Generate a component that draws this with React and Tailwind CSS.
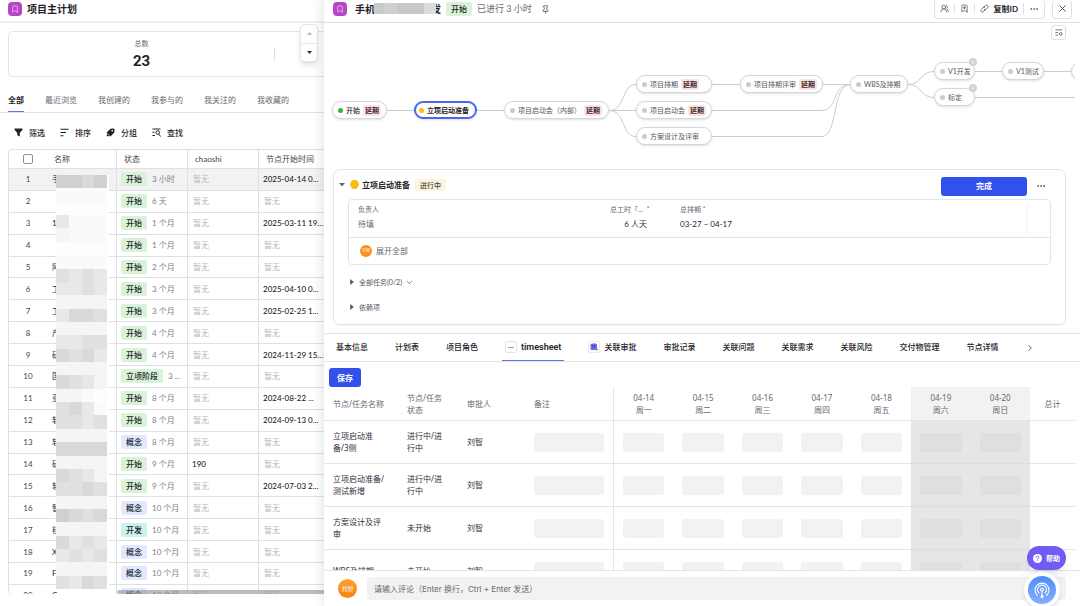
import { useState } from 'react';
import { Bookmark, BookmarkPlus, ChevronDown, ChevronRight, Ellipsis, Pin, UsersRound, X } from 'lucide-react';
import clsx from 'clsx';

const viewTabs = ['全部', '最近浏览', '我创建的', '我参与的', '我关注的', '我收藏的'];

const stateColors = {
  开始: 'bg-[#d9f3d8]',
  立项阶段: 'bg-[#d9f3d8]',
  概念: 'bg-[#e0e9ff]',
  开发: 'bg-[#caf2ee]',
};

const projects = [
  { name: '手', more: '…', state: '开始', age: '3 小时', start: '2025-04-14 0...' },
  { name: '', state: '开始', age: '6 天' },
  { name: '1', state: '开始', age: '1 个月', start: '2025-03-11 19...' },
  { name: '', state: '开始', age: '1 个月' },
  { name: '阿', more: '…', state: '开始', age: '2 个月' },
  { name: '工', more: '…', state: '开始', age: '3 个月', start: '2025-04-10 0...' },
  { name: '工', state: '开始', age: '3 个月', start: '2025-02-25 1...' },
  { name: '产', more: '行', state: '开始', age: '4 个月' },
  { name: '研', state: '开始', age: '4 个月', start: '2024-11-29 15...' },
  { name: '国', more: '司', state: '立项阶段', age: '3 ...' },
  { name: '亚', more: '司', state: '开始', age: '8 个月', start: '2024-08-22 ...' },
  { name: '软', state: '开始', age: '8 个月', start: '2024-09-13 0...' },
  { name: '软', more: '…', state: '概念', age: '8 个月' },
  { name: '研', state: '开始', age: '9 个月', chaoshi: '190' },
  { name: '软', state: '开始', age: '9 个月', start: '2024-07-03 2...' },
  { name: '智', more: '…', state: '概念', age: '10 个月' },
  { name: '核', more: '…', state: '开发', age: '10 个月' },
  { name: 'X', more: '…', state: '概念', age: '10 个月' },
  { name: 'F', state: '概念', age: '10 个月' },
  { name: 'C', state: '概念', age: '10 个月' },
];

// One string per mosaic row, one letter per block, dark to light
const shades = {
  a: 'bg-[#d0d0d1]',
  b: 'bg-[#d9d9da]',
  c: 'bg-[#dfe0e0]',
  d: 'bg-[#e7e8e8]',
  e: 'bg-[#f4f5f5]',
  f: 'bg-[#fafafa]',
  g: 'bg-[#fdfdfd]',
};
const mosaic = [
  'aaba', 'ffff', 'gggg', 'dfff', 'efff', 'gggg', 'ffff', 'cdcd', 'ddcd', 'eeee', 'dbbc',
  'eeee', 'ddcc', 'bcbd', 'eeee', 'bcde', 'eefg', 'cbdf', 'ccdc', 'eeee', 'bbbb', 'eeee',
  'bcde', 'ccbc', 'eeee', 'abcb', 'eeee', 'bdcd', 'dcdc', 'eeee', 'cdbc',
];

const flowNodes = [
  { label: '开始', late: true, dot: 'bg-[#35b934]', text: 'text-[#1f2329] font-medium', pos: 'left-[8px] top-[78px] w-[55px]' },
  { label: '立项启动准备', active: true, dot: 'bg-[#fbbf00]', text: 'text-[#1f2329] font-bold', pos: 'left-[90px] top-[78px] w-[63px]' },
  { label: '项目启动会（内部）', late: true, pos: 'left-[180px] top-[78px] w-[105px]' },
  { label: '项目排期', late: true, pos: 'left-[312px] top-[52px] w-[76px]' },
  { label: '项目启动会', late: true, pos: 'left-[312px] top-[78px] w-[76px]' },
  { label: '方案设计及评审', pos: 'left-[312px] top-[104px] w-[76px]' },
  { label: '项目排期评审', late: true, pos: 'left-[416px] top-[52px] w-[83px]' },
  { label: 'WBS及排期', pos: 'left-[526px] top-[52px] w-[58px]' },
  { label: 'V1开发', fold: true, pos: 'left-[610px] top-[39px] w-[41px]' },
  { label: '标定', fold: true, pos: 'left-[610px] top-[65px] w-[41px]' },
  { label: 'V1测试', pos: 'left-[678px] top-[39px] w-[42px]' },
  { label: '', pos: 'left-[747px] top-[39px] w-[42px]' },
];

const detailTabs = [
  '基本信息', '计划表', '项目角色', 'timesheet', '关联审批', '审批记录',
  '关联问题', '关联需求', '关联风险', '交付物管理', '节点详情',
];

const days = [
  { date: '04-14', week: '周一' },
  { date: '04-15', week: '周二' },
  { date: '04-16', week: '周三' },
  { date: '04-17', week: '周四' },
  { date: '04-18', week: '周五' },
  { date: '04-19', week: '周六', off: true },
  { date: '04-20', week: '周日', off: true },
];

const sheetRows = [
  { name: '立项启动准备/3侧', status: '进行中/进行中', who: '刘智' },
  { name: '立项启动准备/测试新增', status: '进行中/进行中', who: '刘智' },
  { name: '方案设计及评审', status: '未开始', who: '刘智' },
  { name: 'WBS及排期', status: '未开始', who: '刘智' },
];

function AppIcon() {
  return (
    <span className="flex size-[14px] shrink-0 items-center justify-center rounded-[4px] bg-[#b944c6] text-[#f3d6f6]">
      <Bookmark size={8} strokeWidth={2} />
    </span>
  );
}

function FunnelIcon() {
  return (
    <svg viewBox="0 0 18 18" className="size-[9px]" fill="currentColor">
      <path d="M1 1h16v2.5L11.5 10v7L6.5 14.5V10L1 3.500z" />
    </svg>
  );
}

function SortIcon() {
  return (
    <svg viewBox="0 0 18 18" className="size-[9px]" stroke="currentColor" strokeWidth="2" fill="none">
      <path d="M1 2.500h16M1 9h11M1 15.500h6" />
    </svg>
  );
}

function TagIcon() {
  return (
    <svg viewBox="0 0 18 18" className="size-[9px]">
      <path d="M9 1.500 15.500 1 17 2.500 16.500 9 9 17 1 9.500z" fill="currentColor" />
      <path d="M2.500 12 1 15l3 2 3-1z" fill="currentColor" />
      <circle cx="12.500" cy="5.500" r="1.700" fill="#fff" />
    </svg>
  );
}

function FindIcon() {
  return (
    <svg viewBox="0 0 18 18" className="size-[9px]" stroke="currentColor" strokeWidth="2" fill="none">
      <path d="M1 2h16M1 8.500h4M1 15h5M14 12.500 17 17" />
      <circle cx="11.500" cy="9" r="3.600" />
    </svg>
  );
}

function ClipIcon() {
  return (
    <svg viewBox="0 0 18 18" className="size-[9px]" stroke="currentColor" strokeWidth="1.600" fill="none" strokeLinecap="round">
      <path d="M7.500 7 11 2.800a3 3 0 0 1 4.600 3.800L12 11a3 3 0 0 1-3.600.8" />
      <path d="M10.500 11 7 15.200a3 3 0 0 1-4.600-3.800L6 7a3 3 0 0 1 3.600-.8" />
    </svg>
  );
}

const toolbar = [
  { label: '筛选', Icon: FunnelIcon },
  { label: '排序', Icon: SortIcon },
  { label: '分组', Icon: TagIcon },
  { label: '查找', Icon: FindIcon },
];

function ProjectTable() {
  const th = 'border-b border-r border-[#dee0e3] text-left font-normal text-[#41464f]';
  const td = 'border-b border-r border-[#dee0e3]';

  return (
    <div className="relative mb-[12px] ml-[8px] min-h-0 flex-1 overflow-hidden rounded-l-[4px] border-l border-t border-[#dee0e3]">
      <table className="h-[457px] w-[321px] table-fixed border-separate border-spacing-0">
        <colgroup>
          <col className="w-[38px]" />
          <col className="w-[70px]" />
          <col className="w-[71px]" />
          <col className="w-[71px]" />
          <col className="w-[71px]" />
        </colgroup>
        <thead>
          <tr className="h-[19px]">
            <th className="border-b border-[#dee0e3]">
              <input type="checkbox" aria-label="全选" className="mx-auto block size-[10px] appearance-none rounded-[2px] border border-[#8f959e] bg-white" />
            </th>
            <th className={clsx(th, 'pl-[7px]')}>名称</th>
            <th className={clsx(th, 'pl-[7px]')}>状态</th>
            <th className={clsx(th, 'pl-[7px]')}>chaoshi</th>
            <th className={clsx(th, 'whitespace-nowrap pl-[7px]')}>节点开始时间</th>
          </tr>
        </thead>
        <tbody>
          {projects.map((p, i) => (
            <tr key={i} className={clsx('h-[21px]', i === 0 && 'bg-[#f2f2f3]')}>
              <td className="border-b border-[#dee0e3] text-center text-[#41464f]">{i + 1}</td>
              <td className={clsx(td, 'pl-[5px] pr-[7px] text-[#1f2329]')}>
                <div className="flex justify-between">
                  <span>{p.name}</span>
                  <span>{p.more}</span>
                </div>
              </td>
              <td className={clsx(td, 'whitespace-nowrap pl-[4px]')}>
                <span className={clsx('inline-block rounded-[2px] px-[5px] font-medium leading-[14px] text-[#1f2329]', stateColors[p.state])}>{p.state}</span>
                <span className="ml-[5px] text-[#7a7f87]">{p.age}</span>
              </td>
              <td className={clsx(td, p.chaoshi ? 'pl-[4px] font-medium text-[#1f2329]' : 'pl-[5px] text-[#b5b9bf]')}>{p.chaoshi || '暂无'}</td>
              <td className={clsx(td, 'whitespace-nowrap', p.start ? 'pl-[4px] font-medium text-[#1f2329]' : 'pl-[5px] text-[#b5b9bf]')}>{p.start || '暂无'}</td>
            </tr>
          ))}
        </tbody>
      </table>

      <div className="absolute left-[47px] top-[25px] flex h-[414px] w-[53px] flex-col bg-white" aria-hidden="true">
        {mosaic.map((row, i) => (
          <div key={i} className="flex flex-1 pr-[2px]">
            {row.split('').map((c, j) => (
              <span key={j} className={clsx('flex-1', shades[c])} />
            ))}
          </div>
        ))}
      </div>

      <div className="absolute bottom-0 left-[108px] right-0 h-[4px] rounded-l-full bg-[#8f9096]/60" />
    </div>
  );
}

function ProjectList() {
  return (
    <div className="flex w-[30%] shrink-0 flex-col overflow-hidden">
      <div className="flex h-[23px] shrink-0 items-center gap-[5px] border-b-2 border-[#eff0f1] pb-[3px] pl-[8px]">
        <AppIcon />
        <h1 className="text-[10px] font-bold text-[#1f2329]">项目主计划</h1>
      </div>

      <div className="relative ml-[8px] mt-[8px] flex h-[46px] shrink-0 items-center rounded-l-[5px] border border-r-0 border-[#e3e4e6]">
        <div className="flex w-[265px] flex-col items-center gap-[4px]">
          <span className="text-[7px] leading-[9px] text-[#646a73]">总数</span>
          <strong className="font-[Roboto] text-[15px] font-bold leading-[18px] text-[#1f2329]">23</strong>
        </div>
        <span className="h-[14px] w-px bg-[#dee0e3]" />
        <div className="absolute -top-[8px] right-[6px] flex h-[38px] w-[18px] flex-col rounded-[4px] border border-[#e5e6e8] bg-white shadow-md">
          <button aria-label="上一个" className="flex flex-1 items-center justify-center border-b border-[#e5e6e8] text-[#b5b9bf]">
            <svg viewBox="0 0 10 6" className="w-[5px]" fill="currentColor"><path d="M5 0 10 6H0z" /></svg>
          </button>
          <button aria-label="下一个" className="flex flex-1 items-center justify-center text-[#2b2f36]">
            <svg viewBox="0 0 10 6" className="w-[5px]" fill="currentColor"><path d="M5 6 10 0H0z" /></svg>
          </button>
        </div>
      </div>

      <div className="mt-[11px] flex h-[25px] shrink-0 gap-[21px] border-b border-[#dee0e3] pl-[8px]">
        {viewTabs.map((t, i) => (
          <button key={t} className={clsx('whitespace-nowrap border-b', i === 0 ? 'border-[#5c75f3] font-bold text-[#1f2329]' : 'border-transparent text-[#646a73]')}>
            {t}
          </button>
        ))}
      </div>

      <div className="flex h-[36px] shrink-0 items-center gap-[15px] pl-[14px] pt-[3px]">
        {toolbar.map(({ label, Icon }) => (
          <button key={label} className="flex items-center gap-[6px] font-medium text-[#1f2329]">
            <Icon />
            {label}
          </button>
        ))}
      </div>

      <ProjectTable />
    </div>
  );
}

function DetailHeader() {
  return (
    <header className="flex h-[23px] shrink-0 items-center border-b border-[#dee0e3] pb-[4px] pl-[9px] pr-[8px]">
      <AppIcon />
      <h2 className="relative ml-[8px] flex w-[86px] justify-between text-[10px] font-bold text-[#1f2329]">
        <span>手机</span>
        <span>发</span>
        <span className="absolute left-[19px] top-0 flex h-[11px] w-[62px]" aria-hidden="true">
          <span className="w-[10px] bg-[#c9caca]" />
          <span className="w-[14px] bg-[#cfd0d0]" />
          <span className="w-[26px] bg-[#c7c9c9]" />
          <span className="flex-1 bg-[#dadbdb]" />
        </span>
      </h2>
      <span className="ml-[5px] rounded-[2px] bg-[#d9f3d8] px-[5px] font-medium leading-[14px] text-[#1f2329]">开始</span>
      <span className="ml-[5px] text-[9px] text-[#646a73]">已进行 3 小时</span>
      <button aria-label="固定" className="ml-[9px] text-[#41464f]"><Pin size={9} strokeWidth={2} /></button>

      <div className="ml-auto flex h-[19px] items-center rounded-[4px] border border-t-0 border-[#dee0e3] text-[#51565d]">
        <button aria-label="成员" className="border-r border-[#dee0e3] px-[5px]"><UsersRound size={9} /></button>
        <button aria-label="收藏" className="border-r border-[#dee0e3] px-[5px]"><BookmarkPlus size={9} /></button>
        <button className="flex items-center gap-[5px] border-r border-[#dee0e3] px-[5px] font-bold">
          <ClipIcon />
          <span className="text-[#1f2329]">复制ID</span>
        </button>
        <button aria-label="更多" className="px-[5px]"><Ellipsis size={10} /></button>
      </div>
      <button aria-label="关闭" className="ml-[7px] flex h-[19px] w-[20px] items-center justify-center rounded-[4px] border border-t-0 border-[#dee0e3] text-[#41464f]">
        <X size={11} strokeWidth={2} />
      </button>
    </header>
  );
}

function FlowChart() {
  return (
    <section className="relative mr-[5px] h-[139px] shrink-0 overflow-hidden">
      <svg className="absolute left-0 top-0" width="1200" height="139" fill="none" stroke="#c9ccd0">
        <path d="M63 87.500H90M153 87.500H180M285 87.500H312M388 61.500H416M499 61.500H526M651 48.500H678M720 48.500H747M651 74.500H1200" />
        <path d="M285 87.500C302 87.500 297 61.500 312 61.500M285 87.500C302 87.500 297 113.500 312 113.500" />
        <path d="M388 87.500H498C514 87.500 508 61.500 526 61.500M388 113.500H498C514 113.500 508 61.500 526 61.500" />
        <path d="M584 61.500C598 61.500 596 48.500 610 48.500M584 61.500C598 61.500 596 74.500 610 74.500" />
      </svg>

      {flowNodes.map((n, i) => (
        <button
          key={i}
          className={clsx(
            'absolute flex h-[18px] items-center whitespace-nowrap rounded-full bg-white text-[7px] shadow-sm',
            n.active ? 'border-2 border-[#4c66f0] pl-[3px]' : 'border border-[#d5d7da] pl-[5px]',
            n.text || 'text-[#51565d]',
            n.pos
          )}
        >
          <span className={clsx('mr-[3px] size-[5px] shrink-0 rounded-full', n.dot || 'bg-[#c9cbd0]')} />
          {n.label}
          {n.late && <span className="ml-[3px] rounded-[2px] bg-[#fde2e2] px-[2px] font-bold leading-[11px] text-[#41262a]">延期</span>}
          {n.fold && (
            <span className="absolute -right-[3px] -top-[5px] flex size-[8px] items-center justify-center rounded-full bg-[#d0d2d6] text-white">
              <svg viewBox="0 0 8 8" className="size-[6px]" stroke="currentColor" fill="none"><path d="M5 1.500 2.500 4 5 6.500" /></svg>
            </span>
          )}
        </button>
      ))}

      <button aria-label="流程设置" className="absolute right-[9px] top-[2px] flex size-[15px] items-center justify-center rounded-[3px] border border-[#dee0e3] bg-white text-[#51565d]">
        <svg viewBox="0 0 18 16" className="w-[8px]" stroke="currentColor" strokeWidth="1.800" fill="none">
          <path d="M1 2h15M1 8h6M1 14h6" />
          <circle cx="13" cy="11" r="3" />
        </svg>
      </button>
    </section>
  );
}

function NodeCard() {
  return (
    <section className="ml-[9px] mr-[14px] mt-[7px] shrink-0 rounded-[7px] border border-[#e3e4e6] px-[14px] pb-[6px] shadow-xs">
      <div className="-ml-[9px] flex h-[29px] items-center">
        <svg viewBox="0 0 10 6" className="w-[6px] text-[#646a73]" fill="currentColor"><path d="M5 6 10 0H0z" /></svg>
        <svg viewBox="0 0 18 18" className="ml-[5px] size-[9px]">
          <path d="M6 1h6q1.500 0 2.300 1.300L17 7.500q.8 1.500 0 3L14.300 15.700Q13.500 17 12 17H6q-1.500 0-2.300-1.300L1 10.500q-.8-1.500 0-3L3.700 2.300Q4.500 1 6 1z" fill="#fbc000" stroke="#d9a400" />
        </svg>
        <h3 className="ml-[3px] font-bold text-[#1f2329]">立项启动准备</h3>
        <span className="ml-[5px] rounded-[2px] bg-[#fcf3dc] px-[5px] text-[7px] font-medium leading-[12px] text-[#41464f]">进行中</span>
        <button className="ml-auto mt-[3px] h-[19px] w-[86px] rounded-[3px] bg-[#3250eb] font-bold text-white">完成</button>
        <button aria-label="更多" className="ml-[9px] mr-[5px] mt-[3px] text-[#41464f]"><Ellipsis size={10} /></button>
      </div>

      <div className="rounded-[4px] border border-[#e3e4e6] text-[#646a73]">
        <div className="flex h-[38px] border-b border-[#e3e4e6] pl-[9px] pt-[5px]">
          <dl className="w-[252px] leading-[9px]">
            <dt className="text-[7px]">负责人</dt>
            <dd className="mt-[6px]">待填</dd>
          </dl>
          <dl className="w-[70px] leading-[9px]">
            <dt className="text-[7px]">总工时「... <span className="ml-[2px] text-[#f54a45]">*</span></dt>
            <dd className="mt-[6px] w-[37px] text-right text-[#2b2f36]">6 人天</dd>
          </dl>
          <dl className="flex-1 leading-[9px]">
            <dt className="text-[7px]">总排期 <span className="text-[#f54a45]">*</span></dt>
            <dd className="mt-[6px] text-[#1f2329]">03-27 ~ 04-17</dd>
          </dl>
          <span className="mb-[3px] mr-[22px] w-[2px] bg-[#f7f7f8]" />
        </div>
        <button className="flex h-[26px] items-center gap-[4px] pl-[11px]">
          <span className="flex size-[12px] items-center justify-center rounded-full bg-[#ff8f1a] text-[4px] text-white">刘智</span>
          展开全部
        </button>
      </div>

      <button className="flex h-[27px] items-center pt-[7px] text-[7px] text-[#51565d]">
        <svg viewBox="0 0 6 10" className="ml-[2px] mr-[5px] h-[6px] w-[4px]" fill="currentColor"><path d="M6 5 0 10V0z" /></svg>
        全部任务(0/2)
        <ChevronDown size={9} className="ml-[3px]" />
      </button>
      <button className="flex h-[26px] items-center pt-[4px] text-[7px] text-[#51565d]">
        <svg viewBox="0 0 6 10" className="ml-[2px] mr-[5px] h-[6px] w-[4px]" fill="currentColor"><path d="M6 5 0 10V0z" /></svg>
        依赖项
      </button>
    </section>
  );
}

function DetailTabs() {
  const [active, setActive] = useState('timesheet');

  return (
    <nav className="mt-[8px] flex h-[29px] shrink-0 items-stretch gap-[27px] border-y border-[#e3e4e6] pl-[12px]">
      {detailTabs.map((t) => (
        <button
          key={t}
          onClick={() => setActive(t)}
          className={clsx(
            'flex shrink-0 items-center gap-[4px] border-b font-medium text-[#1f2329]',
            t === 'timesheet' && '-mx-[3px] px-[3px]',
            t === active ? 'border-[#5c75f3]' : 'border-transparent'
          )}
        >
          {t === 'timesheet' && (
            <span className="flex size-[12px] items-center justify-center rounded-[2px] border border-[#e3e4e6]">
              <span className="h-px w-[6px] bg-[#7fa8d8]" />
            </span>
          )}
          {t === '关联审批' && (
            <span className="flex size-[12px] items-center justify-center rounded-[2px] border border-[#e9eaec]">
              <svg viewBox="0 0 16 16" className="size-[8px]">
                <rect x="1" y="1" width="13" height="13" rx="3" fill="#7463f2" />
                <path d="M4 5h7M4 8h7" stroke="#4c3bd0" strokeWidth="1.500" />
                <circle cx="13" cy="13" r="2.500" fill="#48c774" />
              </svg>
            </span>
          )}
          {t === 'timesheet' ? <span className="font-[Roboto] text-[9px] font-semibold">{t}</span> : t}
        </button>
      ))}
      <button aria-label="更多标签" className="text-[#41464f]"><ChevronRight size={10} /></button>
    </nav>
  );
}

function TimeSheet() {
  const th = 'border-b border-[#e3e4e6] font-normal text-[#646a73]';
  const td = 'border-b border-[#e3e4e6] text-[#2b2f36]';

  return (
    <section className="min-h-0 flex-1 overflow-hidden pr-[5px] pt-[6px]">
      <button className="ml-[5px] block h-[19px] w-[32px] rounded-[3px] bg-[#3250eb] font-bold text-white">保存</button>
      <table className="w-full table-fixed border-separate border-spacing-0 font-['Noto_Sans','Noto_Sans_CJK_SC',sans-serif] leading-[12px]">
        <colgroup>
          <col className="w-[74px]" />
          <col className="w-[60px]" />
          <col className="w-[67px]" />
          <col className="w-[89px]" />
          {days.map((d) => <col key={d.date} />)}
          <col className="w-[45px]" />
        </colgroup>
        <thead>
          <tr className="h-[34px]">
            <th className={clsx(th, 'whitespace-nowrap pl-[9px] text-left')}>节点/任务名称</th>
            <th className={clsx(th, 'pl-[9px] pr-[10px] text-left')}>节点/任务状态</th>
            <th className={clsx(th, 'pl-[9px] text-left')}>审批人</th>
            <th className={clsx(th, 'border-r pl-[9px] text-left')}>备注</th>
            {days.map((d) => (
              <th key={d.date} className={clsx(th, d.off && 'bg-[#f2f2f2]')}>
                {d.date}
                <br />
                {d.week}
              </th>
            ))}
            <th className={th}>总计</th>
          </tr>
        </thead>
        <tbody>
          {sheetRows.map((r) => (
            <tr key={r.name} className="h-[43px]">
              <td className={clsx(td, 'pl-[9px] pr-[10px]')}>{r.name}</td>
              <td className={clsx(td, 'pl-[9px] pr-[10px]')}>{r.status}</td>
              <td className={clsx(td, 'pl-[9px]')}>{r.who}</td>
              <td className={clsx(td, 'border-r px-[9px]')}>
                <input disabled aria-label={`${r.name} 备注`} className="block h-[19px] w-full rounded-[3px] bg-[#f2f2f2]" />
              </td>
              {days.map((d) => (
                <td key={d.date} className={clsx('border-b px-[9px]', d.off ? 'border-[#dcdddd] bg-[#e6e6e6]' : 'border-[#e3e4e6]')}>
                  <input disabled aria-label={`${r.name} ${d.date}`} className={clsx('block h-[19px] w-full rounded-[3px]', d.off ? 'bg-[#dfdfdf]' : 'bg-[#f2f2f2]')} />
                </td>
              ))}
              <td className={td} />
            </tr>
          ))}
        </tbody>
      </table>
    </section>
  );
}

function CommentBar() {
  return (
    <footer className="flex h-[36px] shrink-0 items-center gap-[10px] border-t border-[#e3e4e6] bg-white pl-[14px] pr-[14px]">
      <span className="flex size-[19px] shrink-0 items-center justify-center rounded-full bg-linear-to-b from-[#ffa034] to-[#f58200] text-[6px] text-white">刘智</span>
      <input
        type="text"
        aria-label="评论"
        placeholder="请输入评论（Enter 换行，Ctrl + Enter 发送）"
        className="h-[23px] min-w-0 flex-1 rounded-[4px] bg-[#f2f2f2] px-[7px] font-['Inter','Noto_Sans_CJK_SC',sans-serif] text-[8px] placeholder:text-[#646a73] focus:outline-none"
      />
    </footer>
  );
}

export default function App() {
  return (
    <div className="relative flex h-screen overflow-hidden bg-white font-['Lato','Noto_Sans_CJK_SC',sans-serif] text-[8px] leading-[12px]">
      <ProjectList />
      <main className="relative flex min-w-0 flex-1 flex-col bg-white shadow-[0_0_12px_rgba(31,35,41,0.16)]">
        <DetailHeader />
        <FlowChart />
        <NodeCard />
        <DetailTabs />
        <TimeSheet />
        <CommentBar />
      </main>

      <button className="absolute bottom-[36px] right-[14px] flex h-[24px] w-[39px] items-center justify-center gap-[4px] rounded-full bg-[#705cf2] text-[7px] font-bold text-white shadow-lg">
        <svg viewBox="0 0 18 18" className="size-[9px]">
          <circle cx="9" cy="9" r="9" fill="#fff" />
          <path d="M6.300 7.200a2.700 2.700 0 1 1 3.900 2.300c-.8.400-1.200.8-1.200 1.600M9 13v1.600" stroke="#705cf2" strokeWidth="1.900" fill="none" />
        </svg>
        帮助
      </button>
      <button aria-label="智能助手" className="absolute -bottom-[2px] right-[20px] flex size-[36px] items-center justify-center rounded-full bg-white shadow-md">
        <span className="flex size-[28px] items-center justify-center rounded-full bg-linear-to-b from-[#4f8bf9] to-[#82b0fd]">
          <svg viewBox="0 0 32 32" className="size-[16px]" stroke="#fff" strokeWidth="2.200" fill="none" strokeLinecap="round">
            <path d="M7 27a14 14 0 1 1 18 0" />
            <path d="M10 22a9 9 0 1 1 12 0" />
            <circle cx="16" cy="15" r="3" />
            <path d="M16 18v11" />
            <circle cx="16" cy="29" r="2" fill="#fff" />
          </svg>
        </span>
      </button>
    </div>
  );
}
